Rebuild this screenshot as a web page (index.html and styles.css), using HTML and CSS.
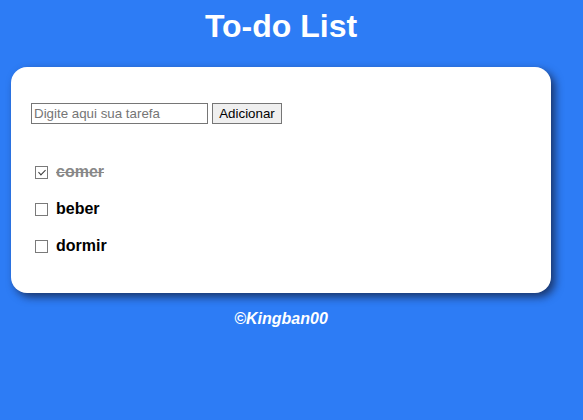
FILE: index.html
```html
<!DOCTYPE html>
<html lang="pt-BR">
<head>
<meta charset="utf-8">
<title>To-do List</title>
<link rel="stylesheet" href="styles.css">
</head>
<body>
<div class="page">
  <h1 class="title">To-do List</h1>
  <main class="card">
    <form class="add-form">
      <input class="task-input" type="text" placeholder="Digite aqui sua tarefa">
      <button class="add-btn" type="button">Adicionar</button>
    </form>
    <ul class="task-list">
      <li class="task done"><input class="task-check" type="checkbox" checked><span class="task-text">comer</span></li>
      <li class="task"><input class="task-check" type="checkbox"><span class="task-text">beber</span></li>
      <li class="task"><input class="task-check" type="checkbox"><span class="task-text">dormir</span></li>
    </ul>
  </main>
  <footer class="footer">©Kingban00</footer>
</div>
</body>
</html>
```
FILE: styles.css
```css
html, body {
  margin: 0;
  padding: 0;
}
body {
  background: #2d7cf5;
  font-family: "Liberation Sans", Arial, sans-serif;
}
.page {
  width: 540px;
  margin-left: 11px;
  padding-top: 8px;
}
.title {
  margin: 0 0 22px;
  text-align: center;
  color: #fff;
  font-size: 32px;
  font-weight: bold;
  line-height: 37px;
}
.card {
  background: #fff;
  border-radius: 16px;
  box-shadow: 4px 4px 8px rgba(20, 30, 60, 0.75);
  padding: 36px 20px 38px;
  height: 226px;
  box-sizing: border-box;
}
.add-form {
  display: flex;
  align-items: center;
  gap: 4px;
  margin: 0;
}
.task-input {
  box-sizing: border-box;
  width: 177px;
  height: 21px;
  margin: 0;
  padding: 1px 2px;
  border: 1px solid #767676;
  font-family: "Liberation Sans", Arial, sans-serif;
  font-size: 13.33px;
  color: #000;
}
.task-input::placeholder {
  color: #757575;
}
.add-btn {
  box-sizing: border-box;
  width: 70px;
  height: 21px;
  margin: 0;
  padding: 1px 6px;
  border: 1px solid #767676;
  background: #efefef;
  border-radius: 0;
  font-family: "Liberation Sans", Arial, sans-serif;
  font-size: 13.33px;
  color: #000;
}
.task-list {
  list-style: none;
  margin: 38px 0 0;
  padding: 0;
  display: flex;
  flex-direction: column;
  gap: 16.5px;
}
.task {
  display: flex;
  align-items: center;
  height: 20.5px;
}
.task-check {
  -webkit-appearance: none;
  appearance: none;
  position: relative;
  box-sizing: border-box;
  width: 13px;
  height: 13px;
  margin: 0 8px 0 4px;
  border: 1px solid #7a7a7a;
  border-radius: 0;
  background: #fff;
}
.task-check:checked::after {
  content: "";
  position: absolute;
  left: 3.5px;
  top: 1px;
  width: 3px;
  height: 6px;
  border: solid #3a3a3a;
  border-width: 0 1.5px 1.5px 0;
  transform: rotate(45deg);
}
.task-text {
  font-size: 16px;
  font-weight: bold;
  color: #000;
}
.done .task-text {
  color: #888;
  text-decoration: line-through;
}
.footer {
  margin-top: 17px;
  text-align: center;
  color: #fff;
  font-size: 16px;
  font-weight: bold;
  font-style: italic;
}
```
